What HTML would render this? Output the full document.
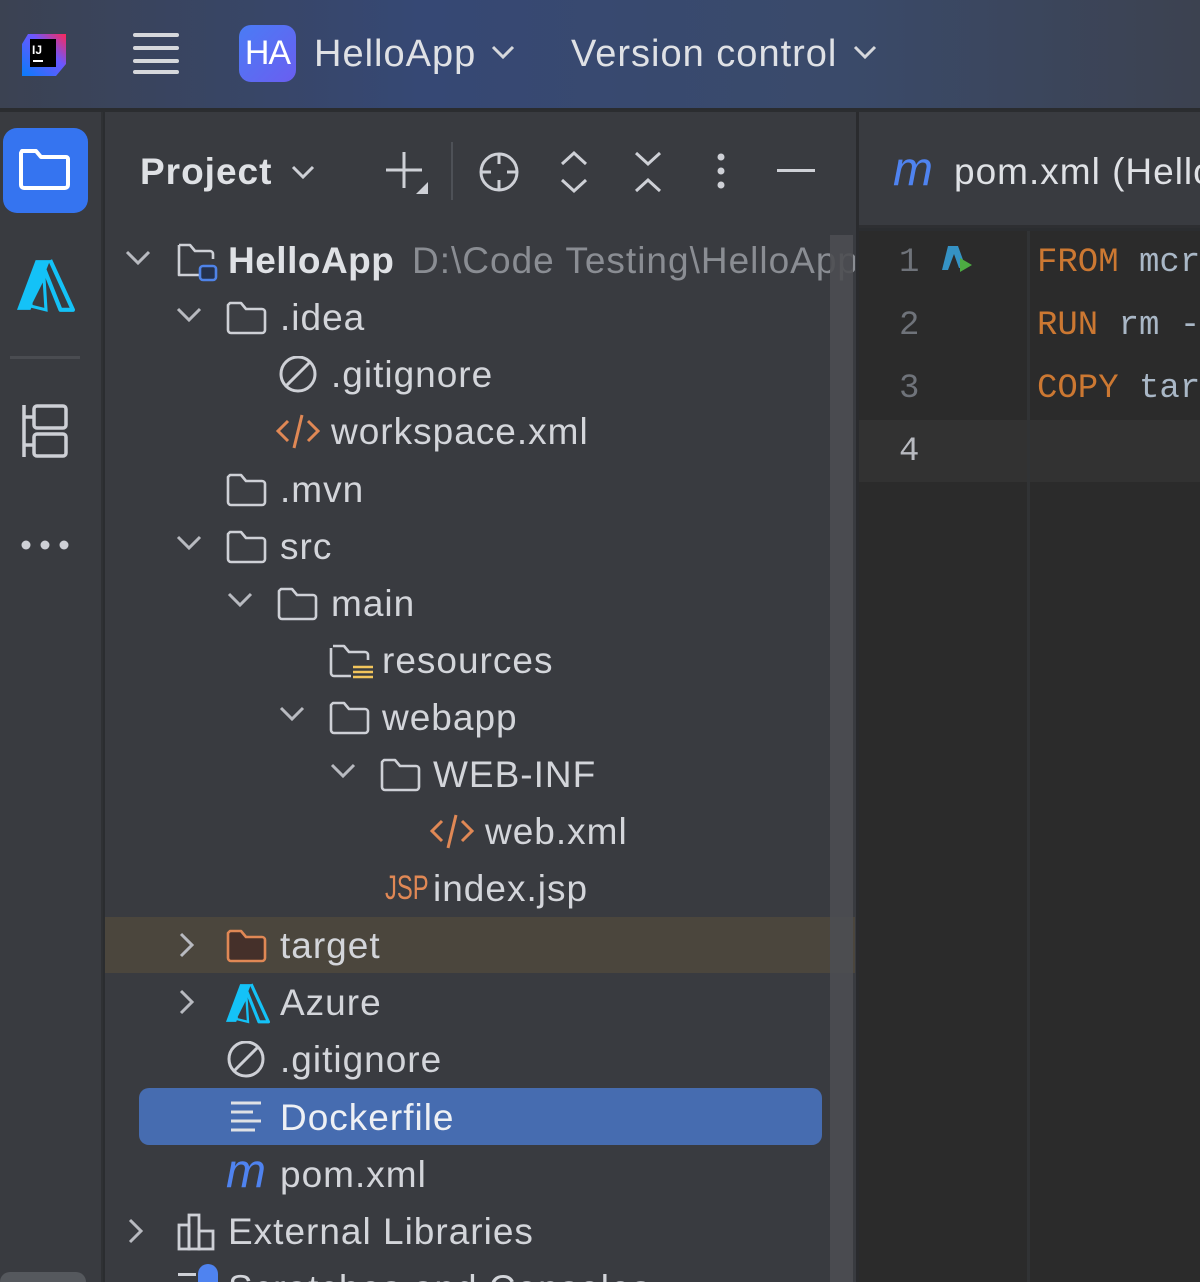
<!DOCTYPE html>
<html style="width:1200px;height:1282px;overflow:hidden"><head><meta charset="utf-8"><style>
*{margin:0;padding:0;box-sizing:border-box}
body{width:1200px;height:1282px;overflow:hidden;background:#2b2d30;font-family:"Liberation Sans",sans-serif;position:relative;color:#d3d5da}
.hdr{position:absolute;left:0;top:0;width:1200px;height:110px;background:linear-gradient(90deg,#3b4252 0%,#364874 35%,#3a4a6a 70%,#3c4250 100%);border-bottom:2px solid #2a2c2f}
.strip{position:absolute;left:0;top:112px;width:103px;height:1170px;background:#393b40;border-right:2px solid #2f3134}
.panel{position:absolute;left:105px;top:112px;width:751px;height:1170px;background:#393b40;overflow:hidden}
.divider{position:absolute;left:856px;top:112px;width:3px;height:1170px;background:#2a2b2e}
.tabs{position:absolute;left:859px;top:112px;width:341px;height:116px;background:#393b40;border-bottom:3px solid #2e2f32}
.gut{position:absolute;left:859px;top:231px;width:168px;height:1051px;background:#2b2b2b}
.gsep{position:absolute;left:1027px;top:231px;width:3px;height:1051px;background:#313335}
.cur{position:absolute;left:859px;top:420px;width:341px;height:62px;background:#323232}
.t{position:absolute;font-size:37px;line-height:57px;white-space:nowrap;letter-spacing:1px}
.ab{position:absolute}
.mono{font-family:"Liberation Mono",monospace;font-size:34px;position:absolute;line-height:63px;white-space:nowrap}
</style></head><body>
<div class="hdr"></div>
<svg class="ab" style="left:20px;top:30px" width="50" height="48" viewBox="0 0 50 48"><defs><linearGradient id="lg" x1="0" y1="1" x2="1" y2="0"><stop offset="0" stop-color="#087cfa"/><stop offset="0.6" stop-color="#6b57ff"/><stop offset="1" stop-color="#fe2857"/></linearGradient></defs><path d="M8 4h38v30l-10 12H2V14z" fill="url(#lg)"/><rect x="10" y="9" width="26" height="28" fill="#000"/><text x="12" y="24" font-family="Liberation Sans" font-weight="bold" font-size="12" fill="#fff">IJ</text><rect x="13" y="30" width="10" height="2" fill="#fff"/></svg>
<svg class="ab" style="left:132px;top:30px" width="48" height="48"><g stroke="#d6d8dc" stroke-width="4" stroke-linecap="round"><line x1="3" y1="5" x2="45" y2="5"/><line x1="3" y1="18" x2="45" y2="18"/><line x1="3" y1="31" x2="45" y2="31"/><line x1="3" y1="42" x2="45" y2="42"/></g></svg>
<div class="ab" style="left:239px;top:25px;width:57px;height:57px;border-radius:12px;background:linear-gradient(135deg,#4a7cf5,#6a5ef0);color:#fff;font-size:34px;line-height:57px;text-align:center;letter-spacing:-1px">HA</div>
<div class="t" style="left:314px;top:26px;color:#dfe1e5;font-size:38px;letter-spacing:1px">HelloApp</div>
<svg class="ab" style="left:490px;top:44px" width="26" height="18"><path d="M3 3l10 10 10-10" fill="none" stroke="#d6d8dc" stroke-width="3"/></svg>
<div class="t" style="left:571px;top:26px;color:#dfe1e5;font-size:38px;letter-spacing:1px">Version control</div>
<svg class="ab" style="left:852px;top:44px" width="26" height="18"><path d="M3 3l10 10 10-10" fill="none" stroke="#d6d8dc" stroke-width="3"/></svg>

<div class="strip"></div>
<div class="ab" style="left:3px;top:128px;width:85px;height:85px;border-radius:14px;background:#3574f0"></div>
<svg class="ab" style="left:18px;top:147px" width="54" height="46"><path d="M4 4h14l5 6h25a2 2 0 0 1 2 2v26a3 3 0 0 1-3 3H6a3 3 0 0 1-3-3V6z" fill="none" stroke="#fff" stroke-width="4" stroke-linejoin="round"/></svg>
<svg width="0" height="0" style="position:absolute"><defs>
<g id="az"><path d="M18 2h14L13 50H0z" fill="#14c2f7"/><path d="M32 2l22 48H42L26 10" fill="none" stroke="#14c2f7" stroke-width="4" stroke-linejoin="round"/><path d="M26 20l-12 24 12 0z" fill="#393b40"/><path d="M26 18l-14 28 16 4z" fill="none" stroke="#14c2f7" stroke-width="3"/></g>
<g id="chd"><path d="M3 3l11 11 11-11" fill="none" stroke="#b8bac0" stroke-width="3"/></g>
<g id="chr"><path d="M3 3l11 11-11 11" fill="none" stroke="#b8bac0" stroke-width="3"/></g>
<g id="fold"><path d="M4 3h11l5 6h16a3 3 0 0 1 3 3v18a3 3 0 0 1-3 3H5a3 3 0 0 1-3-3V5z" fill="#3c3e43" stroke="#ced0d6" stroke-width="2.6" stroke-linejoin="round"/></g>
<g id="ign"><circle cx="20" cy="18" r="17" fill="none" stroke="#ced0d6" stroke-width="3"/><line x1="8" y1="30" x2="32" y2="6" stroke="#ced0d6" stroke-width="3"/></g>
<g id="xml"><g fill="none" stroke="#e08855" stroke-width="3"><path d="M12 8L2 18l10 10"/><path d="M32 8l10 10-10 10"/><line x1="26" y1="2" x2="18" y2="35"/></g></g>
</defs></svg>
<svg class="ab" style="left:17px;top:258px" width="58" height="54" viewBox="0 0 56 52"><use href="#az"/></svg>
<div class="ab" style="left:10px;top:356px;width:70px;height:3px;background:#4a4c51"></div>
<svg class="ab" style="left:20px;top:403px" width="50" height="56"><g fill="none" stroke="#ced0d6" stroke-width="3.5"><line x1="4" y1="2" x2="4" y2="54"/><line x1="4" y1="14" x2="14" y2="14"/><line x1="4" y1="42" x2="14" y2="42"/><rect x="14" y="3" width="32" height="22" rx="3"/><rect x="14" y="31" width="32" height="22" rx="3"/></g></svg>
<svg class="ab" style="left:20px;top:536px" width="52" height="18"><g fill="#ced0d6"><circle cx="6" cy="9" r="4.5"/><circle cx="25" cy="9" r="4.5"/><circle cx="44" cy="9" r="4.5"/></g></svg>
<div class="ab" style="left:0;top:1272px;width:86px;height:10px;border-radius:10px 10px 0 0;background:#55585d"></div>

<div class="panel"></div>
<div class="t" style="left:140px;top:143px;font-weight:bold;color:#dfe1e5;font-size:37px">Project</div>
<svg class="ab" style="left:290px;top:164px" width="26" height="18"><path d="M3 3l10 10 10-10" fill="none" stroke="#ced0d6" stroke-width="3"/></svg>
<svg class="ab" style="left:384px;top:150px" width="46" height="46"><g stroke="#ced0d6" stroke-width="3"><line x1="20" y1="2" x2="20" y2="38"/><line x1="2" y1="20" x2="38" y2="20"/></g><path d="M44 32v12H32z" fill="#ced0d6"/></svg>
<div class="ab" style="left:451px;top:142px;width:2px;height:58px;background:#4e5157"></div>
<svg class="ab" style="left:477px;top:150px" width="44" height="44"><g fill="none" stroke="#ced0d6" stroke-width="3"><circle cx="22" cy="22" r="18"/><line x1="22" y1="4" x2="22" y2="14"/><line x1="22" y1="30" x2="22" y2="40"/><line x1="4" y1="22" x2="14" y2="22"/><line x1="30" y1="22" x2="40" y2="22"/></g></svg>
<svg class="ab" style="left:559px;top:150px" width="30" height="44"><g fill="none" stroke="#ced0d6" stroke-width="3"><path d="M3 14l12-11 12 11"/><path d="M3 30l12 11 12-11"/></g></svg>
<svg class="ab" style="left:633px;top:150px" width="30" height="44"><g fill="none" stroke="#ced0d6" stroke-width="3"><path d="M3 3l12 11 12-11"/><path d="M3 41l12-11 12 11"/></g></svg>
<svg class="ab" style="left:714px;top:151px" width="14" height="42"><g fill="#ced0d6"><circle cx="7" cy="6" r="3.5"/><circle cx="7" cy="20" r="3.5"/><circle cx="7" cy="34" r="3.5"/></g></svg>
<div class="ab" style="left:777px;top:169px;width:38px;height:3px;background:#ced0d6"></div>

<div class="ab" style="left:105px;top:917px;width:750px;height:56px;background:#4b463d"></div>
<div class="ab" style="left:139px;top:1088px;width:683px;height:57px;border-radius:10px;background:#466cb0"></div>

<svg class="ab" style="left:124px;top:249px" width="28" height="20"><use href="#chd"/></svg>
<svg class="ab" style="left:176px;top:242px" width="44" height="40"><path d="M3 3h11l5 6h15a3 3 0 0 1 3 3v5M3 3v30h20" fill="none" stroke="#ced0d6" stroke-width="2.6" stroke-linejoin="round"/><rect x="24" y="24" width="16" height="14" rx="3" fill="#25324d" stroke="#4f83e8" stroke-width="2.6"/></svg>
<div class="t" style="left:228px;top:232px;font-weight:bold;color:#dfe1e5;letter-spacing:0.5px">HelloApp</div>
<div class="t" style="left:412px;top:232px;color:#8a8d93;width:443px;overflow:hidden">D:\Code Testing\HelloApp</div>

<svg class="ab" style="left:175px;top:306px" width="28" height="20"><use href="#chd"/></svg>
<svg class="ab" style="left:226px;top:300px" width="42" height="36"><use href="#fold"/></svg>
<div class="t" style="left:280px;top:289px">.idea</div>

<svg class="ab" style="left:278px;top:356px" width="42" height="40"><use href="#ign"/></svg>
<div class="t" style="left:331px;top:346px">.gitignore</div>

<svg class="ab" style="left:276px;top:413px" width="46" height="40"><use href="#xml"/></svg>
<div class="t" style="left:331px;top:403px">workspace.xml</div>

<svg class="ab" style="left:226px;top:472px" width="42" height="36"><use href="#fold"/></svg>
<div class="t" style="left:280px;top:461px">.mvn</div>

<svg class="ab" style="left:175px;top:534px" width="28" height="20"><use href="#chd"/></svg>
<svg class="ab" style="left:226px;top:529px" width="42" height="36"><use href="#fold"/></svg>
<div class="t" style="left:280px;top:518px">src</div>

<svg class="ab" style="left:226px;top:591px" width="28" height="20"><use href="#chd"/></svg>
<svg class="ab" style="left:277px;top:586px" width="42" height="36"><use href="#fold"/></svg>
<div class="t" style="left:331px;top:575px">main</div>

<svg class="ab" style="left:329px;top:643px" width="46" height="38"><path d="M4 3h11l5 6h16a3 3 0 0 1 3 3v5M2 5v25a3 3 0 0 0 3 3h17" fill="none" stroke="#ced0d6" stroke-width="2.6" stroke-linejoin="round"/><g stroke="#f2c55c" stroke-width="2.6"><line x1="24" y1="24" x2="44" y2="24"/><line x1="24" y1="29" x2="44" y2="29"/><line x1="24" y1="34" x2="44" y2="34"/></g></svg>
<div class="t" style="left:382px;top:632px">resources</div>

<svg class="ab" style="left:278px;top:705px" width="28" height="20"><use href="#chd"/></svg>
<svg class="ab" style="left:329px;top:700px" width="42" height="36"><use href="#fold"/></svg>
<div class="t" style="left:382px;top:689px">webapp</div>

<svg class="ab" style="left:329px;top:762px" width="28" height="20"><use href="#chd"/></svg>
<svg class="ab" style="left:380px;top:757px" width="42" height="36"><use href="#fold"/></svg>
<div class="t" style="left:433px;top:746px">WEB-INF</div>

<svg class="ab" style="left:430px;top:813px" width="46" height="40"><use href="#xml"/></svg>
<div class="t" style="left:485px;top:803px">web.xml</div>

<div class="ab" style="left:385px;top:866px;color:#e08855;font-size:34px;line-height:44px;transform:scaleX(0.7);transform-origin:left;white-space:nowrap">JSP</div>
<div class="t" style="left:433px;top:860px">index.jsp</div>

<svg class="ab" style="left:178px;top:931px" width="20" height="30"><use href="#chr"/></svg>
<svg class="ab" style="left:226px;top:928px" width="42" height="36"><path d="M4 3h11l5 6h16a3 3 0 0 1 3 3v18a3 3 0 0 1-3 3H5a3 3 0 0 1-3-3V5z" fill="#45302a" stroke="#e08855" stroke-width="2.6" stroke-linejoin="round"/></svg>
<div class="t" style="left:280px;top:917px">target</div>

<svg class="ab" style="left:178px;top:988px" width="20" height="30"><use href="#chr"/></svg>
<svg class="ab" style="left:226px;top:982px" width="44" height="42" viewBox="0 0 56 52"><use href="#az"/></svg>
<div class="t" style="left:280px;top:974px">Azure</div>

<svg class="ab" style="left:226px;top:1041px" width="42" height="40"><use href="#ign"/></svg>
<div class="t" style="left:280px;top:1031px">.gitignore</div>

<svg class="ab" style="left:229px;top:1100px" width="38" height="34"><g stroke="#dfe1e5" stroke-width="3"><line x1="2" y1="3" x2="32" y2="3"/><line x1="2" y1="12" x2="24" y2="12"/><line x1="2" y1="21" x2="32" y2="21"/><line x1="2" y1="30" x2="26" y2="30"/></g></svg>
<div class="t" style="left:280px;top:1089px;color:#eef0f4">Dockerfile</div>

<div class="ab" style="left:226px;top:1144px;color:#4f83f0;font-size:48px;line-height:56px;font-style:italic">m</div>
<div class="t" style="left:280px;top:1146px">pom.xml</div>

<svg class="ab" style="left:127px;top:1217px" width="20" height="30"><use href="#chr"/></svg>
<svg class="ab" style="left:177px;top:1213px" width="40" height="38"><g fill="none" stroke="#ced0d6" stroke-width="2.8"><rect x="2" y="12" width="10" height="24"/><rect x="12" y="2" width="10" height="34"/><rect x="22" y="18" width="14" height="18"/></g></svg>
<div class="t" style="left:228px;top:1203px">External Libraries</div>

<div class="ab" style="left:178px;top:1273px;width:18px;height:3px;background:#ced0d6"></div>
<div class="ab" style="left:198px;top:1264px;width:20px;height:18px;border-radius:10px 10px 0 0;background:#4f83f0"></div>
<div class="t" style="left:228px;top:1260px;height:22px;overflow:hidden">Scratches and Consoles</div>

<div class="ab" style="left:830px;top:235px;width:23px;height:1047px;background:#4c4e52;opacity:0.9"></div>

<div class="divider"></div>
<div class="tabs"></div>
<div class="ab" style="left:893px;top:142px;color:#4f83f0;font-size:48px;line-height:56px;font-style:italic">m</div>
<div class="t" style="left:954px;top:143px;color:#dfe1e5;width:246px;overflow:hidden">pom.xml (HelloApp)</div>
<div class="gut" style="width:341px"></div>
<div class="cur"></div>
<div class="gsep"></div>
<div class="mono" style="left:899px;top:232px;color:#6f737a">1</div>
<div class="mono" style="left:899px;top:295px;color:#6f737a">2</div>
<div class="mono" style="left:899px;top:358px;color:#6f737a">3</div>
<div class="mono" style="left:899px;top:421px;color:#b8bac0">4</div>
<svg class="ab" style="left:942px;top:244px" width="34" height="34"><path d="M6 2h10l8 22H17L12 10 6 26H0z" fill="#3592c4"/><path d="M18 14l12 7-12 7z" fill="#4dac42"/></svg>
<div class="ab" style="left:1030px;top:231px;width:170px;height:200px;overflow:hidden">
<div class="mono" style="left:7px;top:1px;color:#cc7832">FROM <span style="color:#a9b7c6">mcr</span></div>
<div class="mono" style="left:7px;top:64px;color:#cc7832">RUN <span style="color:#a9b7c6">rm -</span></div>
<div class="mono" style="left:7px;top:127px;color:#cc7832">COPY <span style="color:#a9b7c6">tar</span></div>
</div>
</body></html>
